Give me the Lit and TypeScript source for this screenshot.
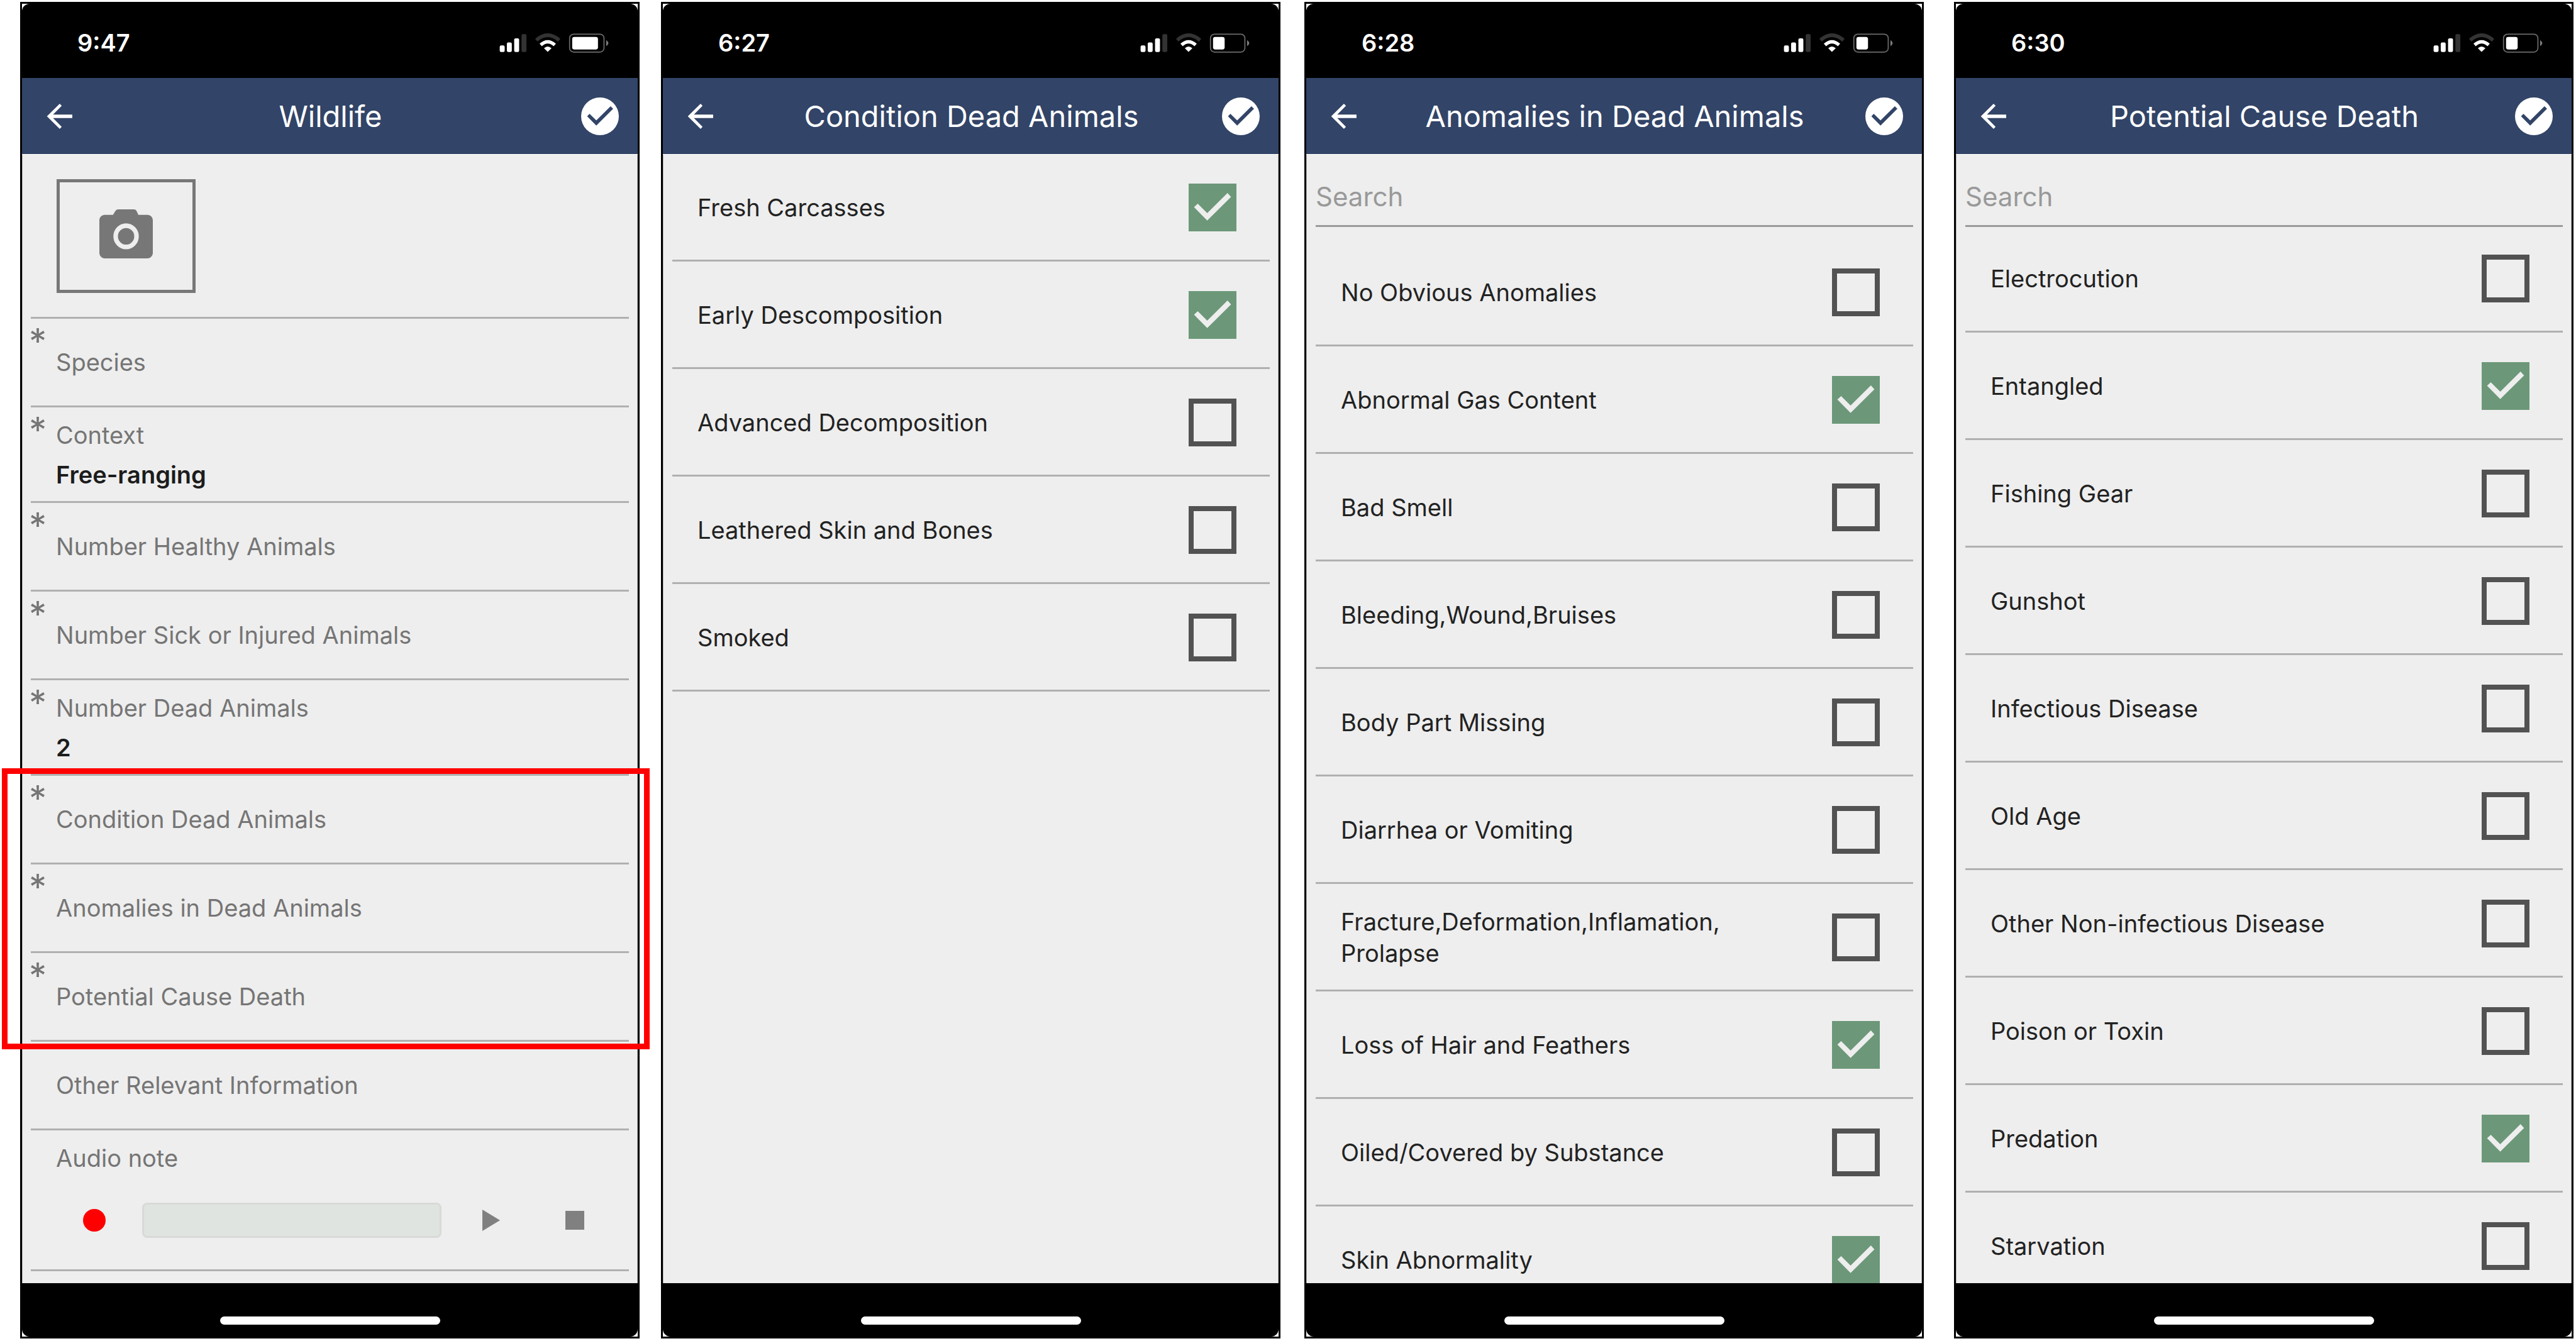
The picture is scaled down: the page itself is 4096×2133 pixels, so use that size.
import { LitElement, html, css, nothing } from "lit";
import { customElement, property } from "lit/decorators.js";

interface Option {
  label: string;
  checked?: boolean;
}

interface Field {
  label: string;
  value?: string;
  required?: boolean;
}

const CONDITIONS: Option[] = [
  { label: "Fresh Carcasses", checked: true },
  { label: "Early Descomposition", checked: true },
  { label: "Advanced Decomposition" },
  { label: "Leathered Skin and Bones" },
  { label: "Smoked" },
];

const ANOMALIES: Option[] = [
  { label: "No Obvious Anomalies" },
  { label: "Abnormal Gas Content", checked: true },
  { label: "Bad Smell" },
  { label: "Bleeding,Wound,Bruises" },
  { label: "Body Part Missing" },
  { label: "Diarrhea or Vomiting" },
  { label: "Fracture,Deformation,Inflamation, Prolapse" },
  { label: "Loss of Hair and Feathers", checked: true },
  { label: "Oiled/Covered by Substance" },
  { label: "Skin Abnormality", checked: true },
];

const CAUSES: Option[] = [
  { label: "Electrocution" },
  { label: "Entangled", checked: true },
  { label: "Fishing Gear" },
  { label: "Gunshot" },
  { label: "Infectious Disease" },
  { label: "Old Age" },
  { label: "Other Non-infectious Disease" },
  { label: "Poison or Toxin" },
  { label: "Predation", checked: true },
  { label: "Starvation" },
];

const FIELDS: Field[] = [
  { label: "Species", required: true },
  { label: "Context", value: "Free-ranging", required: true },
  { label: "Number Healthy Animals", required: true },
  { label: "Number Sick or Injured Animals", required: true },
  { label: "Number Dead Animals", value: "2", required: true },
];

const DEATH_FIELDS: Field[] = [
  { label: "Condition Dead Animals", required: true },
  { label: "Anomalies in Dead Animals", required: true },
  { label: "Potential Cause Death", required: true },
];

/** Phone frame: status bar, title bar, scrolled content and home indicator. */
@customElement("phone-screen")
export class PhoneScreen extends LitElement {
  @property() time = "";
  @property() heading = "";
  @property({ type: Number }) charge = 100;
  /** Lets the content draw past the frame instead of being clipped by it. */
  @property({ type: Boolean }) overlay = false;

  static styles = css`
    :host {
      display: flex;
      flex-direction: column;
      box-sizing: border-box;
      min-width: 0;
      min-height: 0;
      border: 3px solid #000;
      background: #fff;
    }
    .status {
      flex: none;
      height: 118px;
      box-sizing: border-box;
      padding: 6px 45px 0 88px;
      display: flex;
      align-items: center;
      justify-content: space-between;
      background: #000;
      border-radius: 12px 12px 0 0;
      color: #fff;
    }
    .time {
      font-size: 38px;
      line-height: 48px;
      font-weight: 600;
    }
    .icons {
      width: 176px;
      height: 32px;
    }
    .bar {
      flex: none;
      height: 121px;
      box-sizing: border-box;
      padding: 0 30px 0 32px;
      display: grid;
      grid-template-columns: 60px 1fr 60px;
      align-items: center;
      background: #324467;
      color: #fff;
    }
    .title {
      margin: 0;
      text-align: center;
      font-size: 47px;
      line-height: 60px;
      font-weight: 400;
      white-space: nowrap;
    }
    .action {
      display: block;
      width: 60px;
      height: 60px;
      padding: 0;
      border: 0;
      background: none;
    }
    .action svg {
      display: block;
      width: 60px;
      height: 60px;
    }
    .content {
      flex: 1;
      min-height: 0;
      background: #eee;
      box-shadow: inset 0 1px #fff, inset 1px 0 #b8b8b8, inset -1px 0 #b8b8b8;
    }
    .clip {
      overflow: hidden;
    }
    .home {
      flex: none;
      height: 85px;
      box-sizing: border-box;
      padding-bottom: 19px;
      display: flex;
      align-items: flex-end;
      justify-content: center;
      background: #000;
      border-radius: 0 0 12px 12px;
    }
    .pill {
      width: 350px;
      height: 13px;
      border-radius: 7px;
      background: #fff;
    }
  `;

  render() {
    const level = (141 * this.charge) / 80;
    return html`
      <div class="status">
        <span class="time">${this.time}</span>
        <svg class="icons" viewBox="150 85 600 110" aria-hidden="true">
          <rect x="153" y="155" width="27" height="36" rx="8" fill="#fff" />
          <rect x="192" y="138" width="27" height="53" rx="8" fill="#fff" />
          <rect x="232" y="116" width="27" height="75" rx="8" fill="#fff" />
          <rect x="272" y="93" width="27" height="98" rx="8" fill="#333" />
          <path d="M353 126Q415 72 478 126" fill="none" stroke="#333" stroke-width="20" />
          <path d="M377 152Q415 117 454 152" fill="none" stroke="#fff" stroke-width="18" />
          <path d="M415 190L395 170Q415 152 436 170Z" fill="#fff" />
          <rect x="535" y="93" width="188" height="98" rx="22" fill="none" stroke="#6b6b6b" stroke-width="6" />
          <rect x="549" y="108" width=${level} height="69" rx="12" fill="#fff" />
          <path d="M735 125Q747 133 747 142Q747 151 735 159Z" fill="#7d7d7d" />
        </svg>
      </div>
      <header class="bar">
        <button class="action" aria-label="Back">
          <svg viewBox="138 526 204 204" aria-hidden="true">
            <path d="M164 628L233 560L244 571L197 619H301V637H197L244 685L233 696Z" fill="#fff" />
          </svg>
        </button>
        <h2 class="title">${this.heading}</h2>
        <button class="action" aria-label="Save">
          <svg viewBox="0 0 206 206" aria-hidden="true">
            <circle cx="103" cy="103" r="103" fill="#fff" />
            <path d="M33 103L46 89L83 125L161 48L175 62L83 154Z" fill="#324467" />
          </svg>
        </button>
      </header>
      <main class="content ${this.overlay ? "" : "clip"}"><slot></slot></main>
      <div class="home"><div class="pill"></div></div>
    `;
  }
}

/** List of tick-box options with an optional search box above it. */
@customElement("option-list")
export class OptionList extends LitElement {
  @property({ attribute: false }) options: Option[] = [];
  @property() search = "";

  static styles = css`
    :host {
      display: block;
      padding: 0 14px 0 15px;
    }
    .search {
      display: block;
      width: 100%;
      height: 116px;
      box-sizing: border-box;
      padding: 22px 0 0;
      border: 0;
      border-bottom: 3px solid #999;
      border-radius: 0;
      background: none;
      font: inherit;
      font-size: 42px;
      color: #222;
      outline: none;
    }
    .search::placeholder {
      color: #999;
      opacity: 1;
    }
    .list {
      margin: 0;
      padding: 0;
      list-style: none;
    }
    .spaced {
      margin-top: 19px;
    }
    .tight {
      margin-top: -3px;
    }
    .row {
      height: 171px;
      box-sizing: border-box;
      padding: 2px 53px 0 40px;
      display: flex;
      align-items: center;
      gap: 48px;
      border-bottom: 3px solid #b0b0b0;
    }
    .label {
      flex: 1;
      font-size: 38px;
      line-height: 50px;
      color: #222;
    }
    .check {
      flex: none;
      display: grid;
    }
    .box,
    .tick {
      grid-area: 1 / 1;
      width: 76px;
      height: 76px;
    }
    .box {
      appearance: none;
      margin: 0;
      border: 8px solid #525252;
      border-radius: 0;
      background: transparent;
    }
    .box:checked {
      border-color: #6c9879;
      background: #6c9879;
    }
    .tick {
      visibility: hidden;
      pointer-events: none;
    }
    .box:checked + .tick {
      visibility: visible;
    }
  `;

  render() {
    return html`
      ${this.search
        ? html`<input class="search" type="search" placeholder="Search" aria-label="Search" />`
        : nothing}
      <ul class="list ${this.search}">
        ${this.options.map(
          (o, i) => html`
            <li class="row">
              <label class="label" for="o${i}">${o.label}</label>
              <span class="check">
                <input class="box" id="o${i}" type="checkbox" .checked=${!!o.checked} />
                <svg class="tick" viewBox="0 0 257 257" aria-hidden="true">
                  <path d="M29 127L49 108L100 159L209 51L228 72L100 199Z" fill="#eee" />
                </svg>
              </span>
            </li>
          `,
        )}
      </ul>
    `;
  }
}

/** Wildlife record form. */
@customElement("wildlife-form")
export class WildlifeForm extends LitElement {
  static styles = css`
    :host {
      display: block;
      padding: 0 14px;
      color: #757575;
      font-size: 38px;
      line-height: 48px;
    }
    .photo {
      height: 262px;
      box-sizing: border-box;
      padding: 40px 41px 0;
      border-bottom: 3px solid #b0b0b0;
    }
    .camera {
      display: grid;
      place-items: center;
      width: 221px;
      height: 181px;
      box-sizing: border-box;
      padding: 0 0 8px;
      border: 5px solid #777;
      background: none;
    }
    .camera svg {
      width: 85px;
      height: 78px;
    }
    .field {
      display: grid;
      grid-template-columns: 40px 1fr;
      box-sizing: border-box;
      height: 141px;
      border-bottom: 3px solid #b0b0b0;
    }
    .filled {
      height: 152px;
    }
    .star {
      margin-left: -3px;
      font-size: 56px;
      line-height: 72px;
    }
    .text {
      display: flex;
      flex-direction: column;
      gap: 15px;
      padding-top: 45px;
    }
    .filled .text {
      padding-top: 20px;
    }
    .value {
      color: #1c1c1c;
      font-weight: 600;
    }
    .group {
      position: relative;
    }
    .highlight {
      position: absolute;
      inset: -12px -33px -12px -46px;
      border: 9px solid #f00;
      pointer-events: none;
    }
    .audio {
      height: 224px;
      box-sizing: border-box;
      padding: 20px 41px 0 40px;
      border-bottom: 3px solid #b0b0b0;
    }
    .player {
      display: flex;
      align-items: center;
      margin-top: 47px;
      padding: 0 30px 0 43px;
    }
    .control {
      flex: none;
      display: block;
      height: 36px;
      padding: 0;
      border: 0;
      background: none;
    }
    .control svg {
      display: block;
      height: 36px;
    }
    .track {
      flex: 1;
      height: 56px;
      box-sizing: border-box;
      margin: 0 65px 0 58px;
      border: 3px solid #d8dad8;
      border-radius: 8px;
      background: #dfe4e0;
    }
    .stop {
      margin-left: 104px;
    }
  `;

  private field(f: Field) {
    return html`
      <div class="field ${f.value ? "filled" : ""}">
        <span class="star">${f.required ? "*" : nothing}</span>
        <div class="text">
          <span>${f.label}</span>
          ${f.value ? html`<span class="value">${f.value}</span>` : nothing}
        </div>
      </div>
    `;
  }

  render() {
    return html`
      <div class="photo">
        <button class="camera" aria-label="Add photo">
          <svg viewBox="2 2 20 18" preserveAspectRatio="none" aria-hidden="true">
            <path
              fill="#777"
              d="M9.1 2C8.600 2 8.300 2.200 8 2.600L7.100 4H4C2.900 4 2 4.900 2 6V18C2 19.100 2.900 20 4 20H20C21.100 20 22 19.100 22 18V6C22 4.900 21.100 4 20 4H16.600L15.900 2.600C15.700 2.200 15.400 2 14.900 2Z"
            />
            <circle cx="12" cy="11.9" r="3.9" fill="#777" stroke="#eee" stroke-width="1.7" />
          </svg>
        </button>
      </div>
      ${FIELDS.map((f) => this.field(f))}
      <div class="group">
        ${DEATH_FIELDS.map((f) => this.field(f))}
        <div class="highlight"></div>
      </div>
      ${this.field({ label: "Other Relevant Information" })}
      <div class="audio">
        <span>Audio note</span>
        <div class="player">
          <button class="control" aria-label="Record">
            <svg width="36" viewBox="0 0 36 36" aria-hidden="true">
              <circle cx="18" cy="18" r="18" fill="#f00" />
            </svg>
          </button>
          <div class="track"></div>
          <button class="control" aria-label="Play">
            <svg width="28" viewBox="0 0 28 36" aria-hidden="true">
              <path d="M0 1L28 18L0 35Z" fill="#808080" />
            </svg>
          </button>
          <button class="control stop" aria-label="Stop">
            <svg width="30" viewBox="0 0 30 36" aria-hidden="true">
              <rect y="3" width="30" height="30" fill="#808080" />
            </svg>
          </button>
        </div>
      </div>
    `;
  }
}

@customElement("app-root")
export class AppRoot extends LitElement {
  static styles = css`
    :host {
      display: block;
      background: #fff;
      font-family: Inter, "Liberation Sans", sans-serif;
    }
    .board {
      display: grid;
      grid-template-columns: 1fr 34px 1fr 38px 1fr 48px 1fr;
      grid-template-rows: minmax(0, 1fr);
      box-sizing: border-box;
      height: 100vh;
      padding: 3px 4px 4px 32px;
    }
    .second {
      grid-column: 3;
    }
    .third {
      grid-column: 5;
    }
    .fourth {
      grid-column: 7;
    }
  `;

  render() {
    return html`
      <div class="board">
        <phone-screen time="9:47" heading="Wildlife" charge="80" overlay>
          <wildlife-form></wildlife-form>
        </phone-screen>
        <phone-screen class="second" time="6:27" heading="Condition Dead Animals" charge="36">
          <option-list .options=${CONDITIONS}></option-list>
        </phone-screen>
        <phone-screen class="third" time="6:28" heading="Anomalies in Dead Animals" charge="36">
          <option-list search="spaced" .options=${ANOMALIES}></option-list>
        </phone-screen>
        <phone-screen class="fourth" time="6:30" heading="Potential Cause Death" charge="36">
          <option-list search="tight" .options=${CAUSES}></option-list>
        </phone-screen>
      </div>
    `;
  }
}
